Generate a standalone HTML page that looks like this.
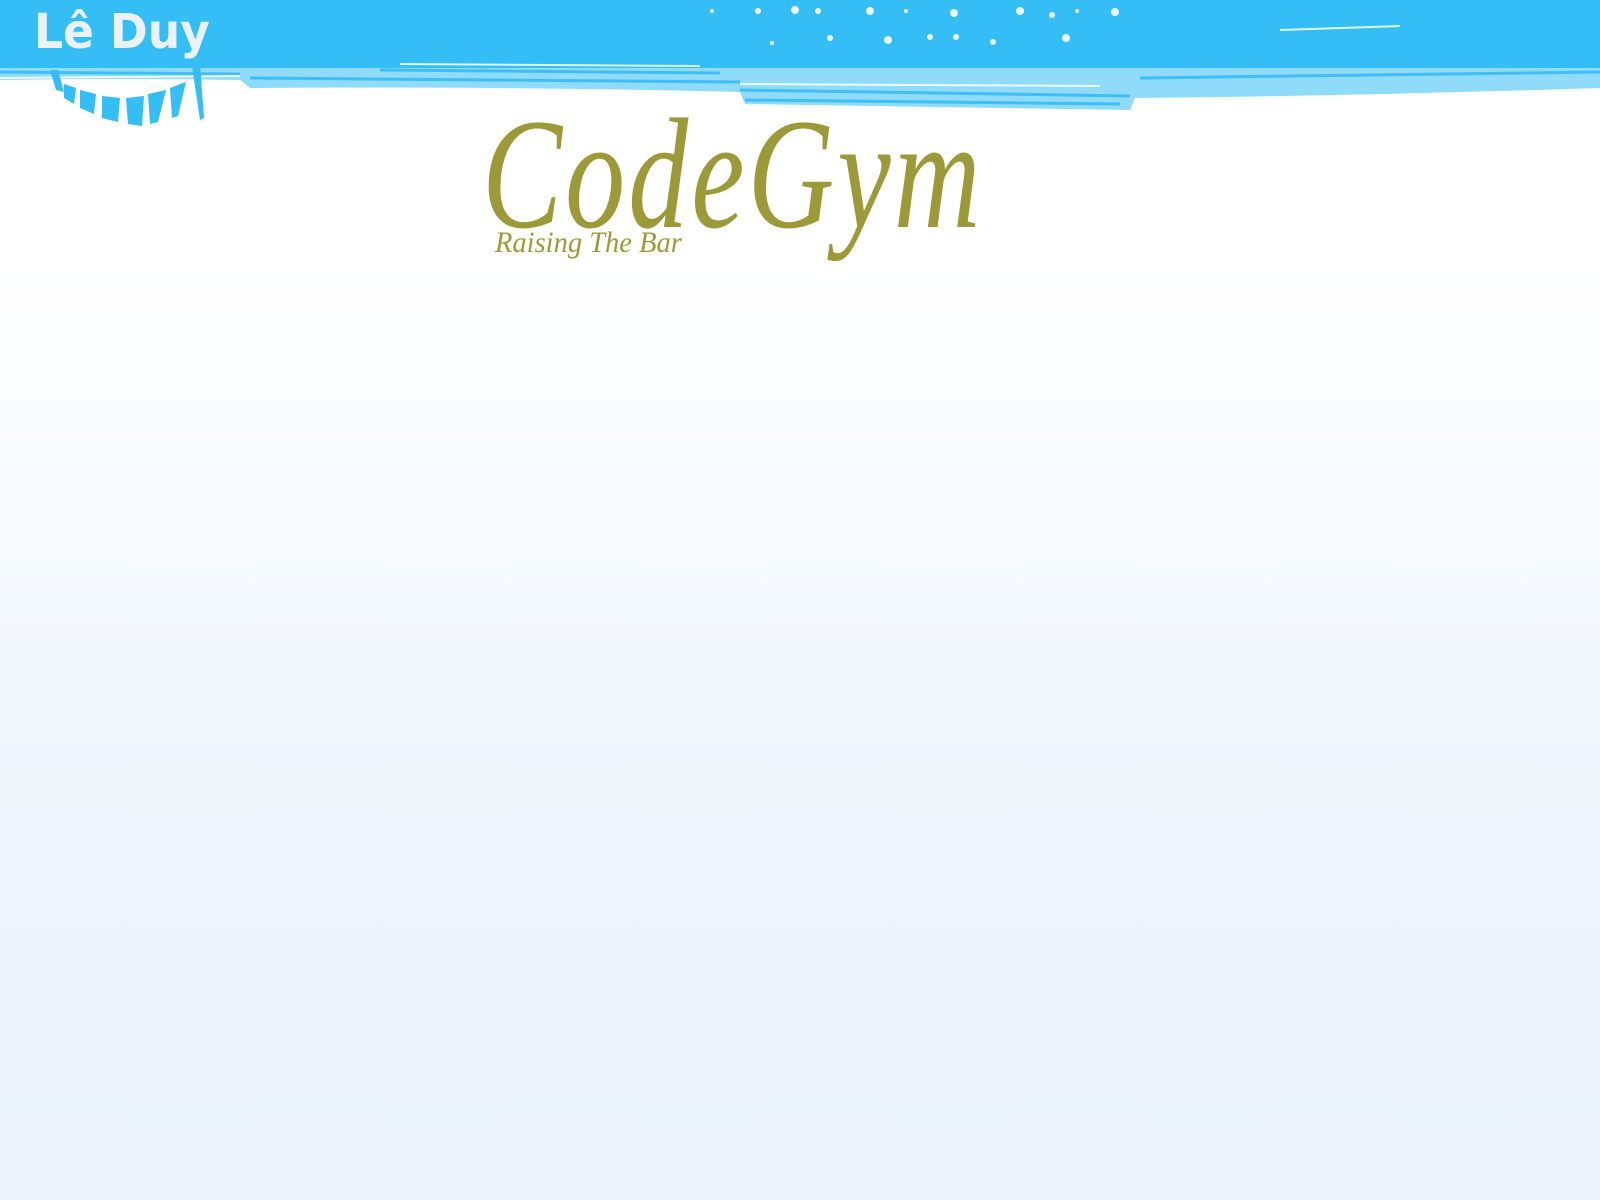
<!DOCTYPE html>
<html><head><meta charset="utf-8"><style>
html,body{margin:0;padding:0}
body{width:1600px;height:1200px;position:relative;overflow:hidden;
background:linear-gradient(180deg,#ffffff 0%,#ffffff 22%,#f6fafe 45%,#eef5fc 70%,#ecf3fb 100%);font-family:"Liberation Sans",sans-serif}
.band{position:absolute;left:0;top:0;width:1600px;height:68px;background:#35bdf5}
.cg{position:absolute;left:482px;top:96px;font-family:"Liberation Serif",serif;font-style:italic;font-size:158px;color:#9c9a38;letter-spacing:4px;transform:scaleX(0.76);transform-origin:left;line-height:1}
.rb{position:absolute;left:495px;top:226px;font-family:"Liberation Serif",serif;font-style:italic;font-size:30px;color:#9c9a38;transform:scaleX(0.95);transform-origin:left}
.ld{position:absolute;left:34px;top:4px;font-family:"DejaVu Sans",sans-serif;font-weight:bold;font-size:48px;color:#eaf2f7;transform:scaleX(0.95);transform-origin:left}
</style></head><body>
<div class="band"></div>
<svg width="1600" height="130" style="position:absolute;left:0;top:0">
<g fill="#35bdf5" opacity="0.55">
<path d="M0 66 L0 80 Q120 78 240 80 L250 88 Q500 86 740 92 L745 104 L1130 110 L1135 98 Q1350 96 1600 88 L1600 60 Z"/>
</g>
<g stroke="#35bdf5" stroke-width="3" opacity="0.9">
<line x1="0" y1="72" x2="240" y2="74"/><line x1="250" y1="78" x2="740" y2="82"/>
<line x1="740" y1="90" x2="1130" y2="96"/><line x1="1140" y1="78" x2="1600" y2="72"/>
<line x1="380" y1="70" x2="720" y2="73"/><line x1="745" y1="100" x2="1120" y2="104"/>
</g>
<g stroke="#ffffff" stroke-width="2" opacity="0.85">
<line x1="400" y1="64" x2="700" y2="66"/><line x1="1280" y1="30" x2="1400" y2="26"/>
<line x1="740" y1="84" x2="1100" y2="86"/><line x1="0" y1="78" x2="240" y2="76"/>
</g>
<g fill="#ffffff" opacity="0.9">
<circle cx="712" cy="11" r="2"/><circle cx="758" cy="11" r="3"/><circle cx="795" cy="10" r="4"/><circle cx="818" cy="11" r="3"/>
<circle cx="870" cy="11" r="4"/><circle cx="906" cy="11" r="2"/><circle cx="954" cy="13" r="4"/><circle cx="1020" cy="11" r="4"/>
<circle cx="1052" cy="15" r="3"/><circle cx="1077" cy="11" r="2"/><circle cx="1115" cy="12" r="4"/>
<circle cx="830" cy="38" r="3"/><circle cx="888" cy="40" r="4"/><circle cx="930" cy="37" r="3"/><circle cx="956" cy="37" r="3"/>
<circle cx="993" cy="42" r="3"/><circle cx="1066" cy="38" r="4"/><circle cx="772" cy="43" r="2"/>
</g>
<g fill="#35bdf5">
<polygon points="50,70 58,70 64,92 56,90"/><polygon points="64,84 76,88 74,104 64,98"/>
<polygon points="80,90 96,94 94,114 80,108"/><polygon points="102,96 120,98 118,122 102,118"/>
<polygon points="126,98 144,96 142,126 128,124"/><polygon points="148,94 166,90 158,122 150,124"/>
<polygon points="170,88 186,82 178,116 172,118"/><polygon points="192,66 200,64 204,118 200,120"/>
</g>
</svg>
<div class="ld">Lê Duy</div>
<div class="cg">CodeGym</div>
<div class="rb">Raising The Bar</div>
</body></html>
